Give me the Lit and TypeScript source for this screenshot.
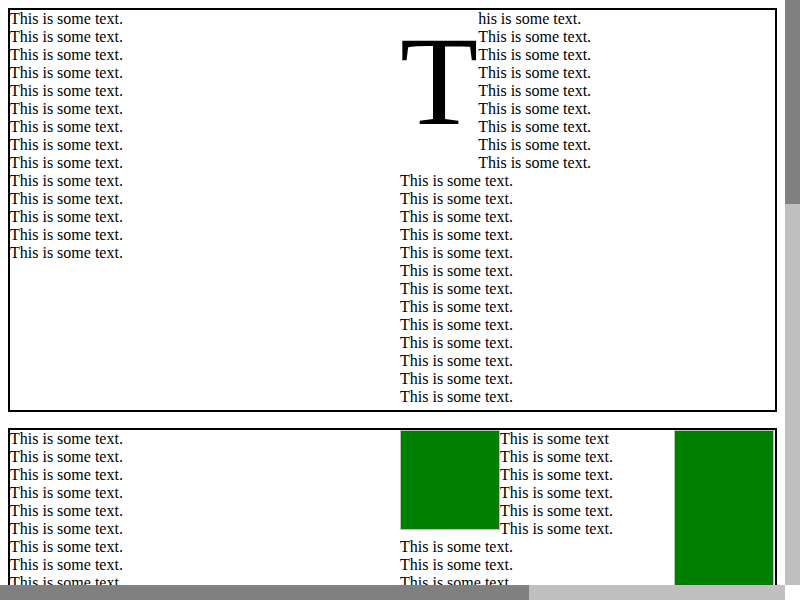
import { LitElement, html, css } from "lit";
import { customElement, property } from "lit/decorators.js";
import { styleMap } from "lit/directives/style-map.js";

const LINE = "This is some text.";

function lines(count: number) {
  return Array.from({ length: count }, () => html`${LINE}<br />`);
}

@customElement("scroll-track")
class ScrollTrack extends LitElement {
  @property() orientation: "horizontal" | "vertical" = "vertical";
  /** Visible and total extent of the scrolled content, in pixels. */
  @property({ type: Number }) visible = 1;
  @property({ type: Number }) total = 1;

  static styles = css`
    :host {
      display: block;
      background: #c0c0c0;
    }
    .thumb {
      width: 100%;
      height: 100%;
      background: #808080;
    }
  `;

  render() {
    const share = `${(this.visible / this.total) * 100}%`;
    const side = this.orientation === "vertical" ? "height" : "width";
    return html`<div class="thumb" style=${styleMap({ [side]: share })}></div>`;
  }
}

@customElement("app-root")
class AppRoot extends LitElement {
  static styles = css`
    :host {
      display: grid;
      grid-template: minmax(0, 1fr) 15px / minmax(0, 1fr) 15px;
      height: 100vh;
      background: #fff;
      color: #000;
      font: 16px/18px "Liberation Serif", "Times New Roman", serif;
    }
    .view {
      overflow: hidden;
      box-sizing: border-box;
      padding: 8px;
    }
    .box {
      display: grid;
      grid-template-columns: 1fr 1fr;
      column-gap: 16px;
      min-height: 400px;
      padding-right: 1px;
      border: 2px solid #000;
    }
    .box + .box {
      margin-top: 16px;
    }
    .column {
      margin: 0;
    }
    .initial::first-letter {
      float: left;
      padding-bottom: 6px;
      font-size: 128px;
      line-height: 142px;
    }
    .block {
      box-sizing: border-box;
      width: 100px;
      height: 100px;
      border: 1px solid #c0c0c0;
      background: #008000;
    }
    .left {
      float: left;
    }
    .right {
      float: right;
      height: 200px;
    }
  `;

  render() {
    return html`
      <main class="view">
        <section class="box">
          <p class="column">${lines(14)}</p>
          <p class="column initial">${lines(22)}</p>
        </section>
        <section class="box">
          <p class="column">${lines(9)}</p>
          <div class="column">
            <div class="block left"></div>
            <div class="block right"></div>
            This is some text<br />${lines(8)}
          </div>
        </section>
      </main>
      <scroll-track orientation="vertical" visible="585" total="1676"></scroll-track>
      <scroll-track orientation="horizontal" visible="785" total="1165"></scroll-track>
    `;
  }
}
